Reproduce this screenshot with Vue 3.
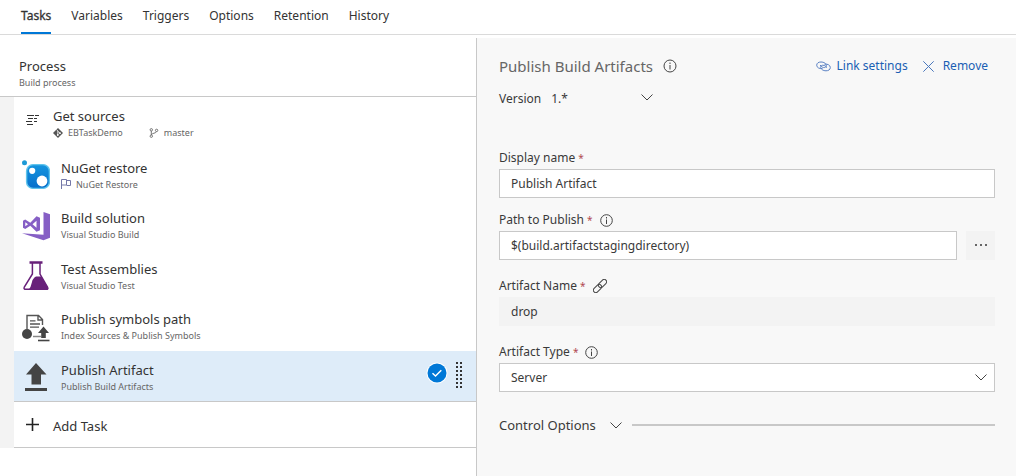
<script setup>
import { ref } from 'vue'

const tabs = ['Tasks', 'Variables', 'Triggers', 'Options', 'Retention', 'History']
const activeTab = ref('Tasks')

const tasks = [
  { icon: 'nuget', title: 'NuGet restore', sub: 'NuGet Restore', flag: true },
  { icon: 'vs', title: 'Build solution', sub: 'Visual Studio Build' },
  { icon: 'flask', title: 'Test Assemblies', sub: 'Visual Studio Test' },
  { icon: 'symbols', title: 'Publish symbols path', sub: 'Index Sources & Publish Symbols' },
  { icon: 'upload', title: 'Publish Artifact', sub: 'Publish Build Artifacts' },
]
const selected = ref('Publish Artifact')

const version = ref('1.*')
const displayName = ref('Publish Artifact')
const path = ref('$(build.artifactstagingdirectory)')
const artifactName = ref('drop')
const artifactType = ref('Server')
</script>

<template>
  <div class="page">
    <nav class="tabs">
      <a v-for="t in tabs" :key="t" href="#" class="tab" :class="{ active: t === activeTab }" @click.prevent="activeTab = t">{{ t }}</a>
    </nav>

    <div class="body">
      <section class="left">
        <header class="process">
          <div class="title">Process</div>
          <div class="sub">Build process</div>
        </header>

        <div class="list">
          <div class="sources">
            <svg class="src-icon" width="13" height="12" viewBox="0 0 13 12" fill="none" stroke="#333" stroke-width="1">
              <path d="M1 1.5h7M9 1.5h4M2 4.5h5M8 4.5h3M0 7.5h6M8 7.5h3M1 10.5h6" />
            </svg>
            <div>
              <div class="title">Get sources</div>
              <div class="sub meta">
                <svg width="10" height="10" viewBox="0 0 10 10">
                  <path d="M5 0L10 5L5 10L0 5Z" fill="#555" />
                  <path d="M3.6 1.6L4.8 3v4M4.8 3.3L7 5.2" stroke="#fff" stroke-width=".8" fill="none" />
                  <circle cx="4.8" cy="7" r=".9" fill="#fff" /><circle cx="7" cy="5.2" r=".9" fill="#fff" />
                </svg>
                <span class="repo">EBTaskDemo</span>
                <svg width="10" height="10" viewBox="0 0 10 10" fill="none" stroke="#666" stroke-width=".9">
                  <circle cx="2.3" cy="1.8" r="1.2" /><circle cx="7.6" cy="2.4" r="1.2" /><circle cx="2.3" cy="8.2" r="1.2" />
                  <path d="M2.3 3v4M7.4 3.6C7 5.6 3 4.8 2.4 6.8" />
                </svg>
                <span>master</span>
              </div>
            </div>
          </div>

          <div class="tasks">
            <div v-for="t in tasks" :key="t.title" class="task" :class="{ selected: t.title === selected }" @click="selected = t.title">
              <svg v-if="t.icon === 'nuget'" class="icon" viewBox="0 0 28 30">
                <defs>
                  <linearGradient id="nugetFill" x1="0" y1="0" x2="0" y2="1">
                    <stop offset="0" stop-color="#1595df" /><stop offset="1" stop-color="#066fcb" />
                  </linearGradient>
                </defs>
                <circle cx="2.5" cy="2.8" r="2.5" fill="#1c9ad6" />
                <rect x="4.6" y="4.6" width="22.8" height="23.8" rx="6.5" fill="url(#nugetFill)" stroke="#5fc4ec" stroke-width="1.4" />
                <circle cx="10.2" cy="10.8" r="3.1" fill="#fff" />
                <circle cx="20" cy="21" r="5.4" fill="#fff" />
              </svg>
              <svg v-else-if="t.icon === 'vs'" class="icon" viewBox="0 0 28 30">
                <path d="M21.5 1L28 3.2V26.7L21.5 29.2L0 22.3L21.5 23.8Z" fill="#865fc5" />
                <path fill-rule="evenodd" d="M1 9.8L3.2 8.5L8.3 11.7L14.5 5.2L18 6.8V19.2L14.5 20.8L8.3 14.7L3.2 18L1 16.7ZM3.3 11.3V15.2L6 13.2ZM14.5 9.7L10.5 13.2L14.5 16.7Z" fill="#865fc5" />
              </svg>
              <svg v-else-if="t.icon === 'flask'" class="icon" viewBox="0 0 28 30">
                <path d="M7.500 1.500H20.500" stroke="#68217a" stroke-width="2.500" />
                <path d="M10.400 2V13L2.300 26Q1.300 28.300 4 28.300H24Q26.800 28.300 25.500 26L18 13V2" fill="none" stroke="#68217a" stroke-width="1.500" />
                <path d="M14 15.500H19.500L26 27Q26.500 29 24 29H6.500Q9 26 10 21Q10.500 17.500 14 15.500Z" fill="#68217a" />
              </svg>
              <svg v-else-if="t.icon === 'symbols'" class="icon" viewBox="0 0 28 30">
                <path d="M5 17V3.500H16.500L20.500 7.500V13M16 3.500V8H20.500" fill="none" stroke="#555" stroke-width="1.400" />
                <path d="M8 8.800H13.500M8 12H18M8 15.200H17" stroke="#555" stroke-width="1.300" />
                <circle cx="5" cy="22" r="5" fill="#444" />
                <path d="M11 24.500H19" stroke="#888" stroke-width="1.500" />
                <path d="M21.500 14.500L27 21H23.800V26H19.200V21H16Z" fill="#444" />
                <path d="M16 28.500H27.500" stroke="#444" stroke-width="1.600" />
              </svg>
              <svg v-else class="icon" viewBox="0 0 28 30">
                <path d="M14 1L24.500 12.500H19V22.500H9.500V12.500H4Z" fill="#444" />
                <rect x="3" y="26" width="22" height="3" fill="#444" />
              </svg>
              <div class="text">
                <div class="title">{{ t.title }}</div>
                <div class="sub meta">
                  <svg v-if="t.flag" class="flag" width="10" height="10" viewBox="0 0 10 10" fill="none" stroke="#7478a8">
                    <path d="M.5 10V.5H5.500V6H.5M5.500 1.500H9.500V6.500H5.500" />
                  </svg>
                  <span>{{ t.sub }}</span>
                </div>
              </div>
              <template v-if="t.title === selected">
                <svg class="check" width="22" height="22" viewBox="0 0 22 22">
                  <circle cx="11" cy="11" r="10.500" fill="#fff" /><circle cx="11" cy="11" r="9.500" fill="#0078d7" />
                  <path d="M6.500 11.300L9.500 14L15.300 8.300" fill="none" stroke="#fff" stroke-width="1.500" />
                </svg>
                <svg class="grip" width="7" height="26" viewBox="0 0 7 26" stroke="#333" stroke-width="2" stroke-dasharray="2 2">
                  <path d="M1 0V26M5 0V26" />
                </svg>
              </template>
            </div>
          </div>

          <button type="button" class="add">
            <svg width="13" height="13" viewBox="0 0 13 13" stroke="#222" stroke-width="1.600"><path d="M6.500 0V13M0 6.500H13" /></svg>
            <span class="title">Add Task</span>
          </button>
        </div>
      </section>

      <section class="right">
        <header class="head">
          <h2>Publish Build Artifacts</h2>
          <button type="button" class="bare" aria-label="About this task">
            <svg width="14" height="14" viewBox="0 0 14 14" fill="none" stroke="#444"><circle cx="7" cy="7" r="6" /><path d="M7 6V10.500M7 3.500V5" /></svg>
          </button>
          <div class="actions">
            <a href="#" class="action" @click.prevent>
              <svg width="15" height="11" viewBox="0 0 15 11" fill="none" stroke="#5b82c4">
                <path d="M6.500 7.500C3.500 8 .7 6.600 .7 4.200C.7 2 2.700 1 5 1C8 1 10.600 2.700 10.300 4.900C10 6.900 7 7.200 5.300 5.300L4 4" />
                <path d="M8.500 3.200C11.500 2.600 14.300 4.200 14.300 6.500C14.300 8.800 12.300 9.800 10 9.800C7 9.800 4.400 8 4.700 5.900C5 3.900 8 3.600 9.700 5.400L11 6.700" />
              </svg>
              Link settings
            </a>
            <a href="#" class="action remove" @click.prevent>
              <svg width="11" height="11" viewBox="0 0 11 11" fill="none" stroke="#4a78bd"><path d="M.3 .3L10.700 10.700M10.700 .3L.3 10.700" /></svg>
              Remove
            </a>
          </div>
        </header>

        <div class="version">
          <label for="version">Version</label>
          <div class="select-wrap">
            <select id="version" v-model="version"><option>1.*</option></select>
            <svg class="chev" width="12" height="7" viewBox="0 0 12 7" fill="none" stroke="#444"><path d="M.5 .5L6 6L11.500 .5" /></svg>
          </div>
        </div>

        <div class="field">
          <div class="label"><label for="display">Display name <b>*</b></label></div>
          <input id="display" v-model="displayName" type="text">
        </div>

        <div class="field">
          <div class="label">
            <label for="path">Path to Publish <b>*</b></label>
            <button type="button" class="bare" aria-label="About Path to Publish">
              <svg width="13" height="13" viewBox="0 0 13 13" fill="none" stroke="#444"><circle cx="6.500" cy="6.500" r="5.800" /><path d="M6.500 5.500V10M6.500 3V4.500" /></svg>
            </button>
          </div>
          <div class="row">
            <input id="path" v-model="path" type="text">
            <button type="button" class="more" aria-label="Browse">
              <svg width="14" height="2" viewBox="0 0 14 2" fill="#666"><path d="M1 0h2v2h-2zM6 0h2v2h-2zM11 0h2v2h-2z" /></svg>
            </button>
          </div>
        </div>

        <div class="field linked">
          <div class="label">
            <label for="name">Artifact Name <b>*</b></label>
            <button type="button" class="bare" aria-label="Linked setting">
              <svg width="14" height="14" viewBox="0 0 14 14" fill="none" stroke="#444">
                <g transform="rotate(-45 7 7)"><rect x="-1.300" y="4.600" width="9.500" height="4.800" rx="2.400" /><rect x="5.800" y="4.600" width="9.500" height="4.800" rx="2.400" /></g>
              </svg>
            </button>
          </div>
          <input id="name" v-model="artifactName" type="text" readonly>
        </div>

        <div class="field linked">
          <div class="label">
            <label for="type">Artifact Type <b>*</b></label>
            <button type="button" class="bare" aria-label="About Artifact Type">
              <svg width="13" height="13" viewBox="0 0 13 13" fill="none" stroke="#444"><circle cx="6.500" cy="6.500" r="5.800" /><path d="M6.500 5.500V10M6.500 3V4.500" /></svg>
            </button>
          </div>
          <div class="select-wrap boxed">
            <select id="type" v-model="artifactType"><option>Server</option></select>
            <svg class="chev" width="12" height="7" viewBox="0 0 12 7" fill="none" stroke="#444"><path d="M.5 .5L6 6L11.500 .5" /></svg>
          </div>
        </div>

        <div class="control">
          <button type="button" class="bare expander">
            Control Options
            <svg width="12" height="7" viewBox="0 0 12 7" fill="none" stroke="#444"><path d="M.5 .5L6 6L11.500 .5" /></svg>
          </button>
          <div class="rule"></div>
        </div>
      </section>
    </div>
  </div>
</template>

<style>
body { background: #fff; }
</style>

<style scoped>
* { box-sizing: border-box; }
.page {
  min-height: 100vh;
  display: flex;
  flex-direction: column;
  font: 12px/16px "Noto Sans", "Open Sans", sans-serif;
  color: #3a3a3a;
}
svg { display: block; flex: none; }
input, select, button { font: inherit; color: inherit; margin: 0; border-radius: 0; }
.tabs {
  display: flex;
  gap: 20px;
  height: 35px;
  padding: 0 21px;
  border-bottom: 1px solid #dadada;
}
.tab {
  color: #333;
  text-decoration: none;
  line-height: 32px;
  border-bottom: 2px solid transparent;
}
.tab.active { border-bottom-color: #0078d7; -webkit-text-stroke: 0.300px #333; }
.body { flex: 1; display: flex; padding-top: 3px; }
.left { flex: 0 0 477px; border-right: 1px solid #c8c8c8; }
.process {
  height: 59px;
  padding: 18px 19px 0;
  border-bottom: 1px solid #c8c8c8;
}
.title { font-size: 13px; line-height: 20px; color: #333; }
.sub { font-size: 9px; line-height: 13px; color: #666; }
.meta { display: flex; align-items: center; }
.list { border-left: 14px solid #f3f3f3; }
.sources { display: flex; height: 52px; padding: 9px 0 0 12px; }
.src-icon { margin: 8px 14px 0 0; }
.meta svg { margin-right: 5px; }
.repo { margin-right: 26px; }
.task {
  display: flex;
  align-items: center;
  height: 50px;
  padding: 2px 13px 0 8px;
  cursor: pointer;
}
.task:nth-child(even) { height: 51px; }
.task.selected { height: 51px; background: #deecf9; border-bottom: 1px solid #c8c8c8; }
.icon { width: 28px; height: 30px; margin-right: 11px; }
.text { flex: 1; padding-bottom: 2px; }
.check { margin: 0 8px 8px 0; }
.grip { margin-bottom: 4px; }
.add {
  display: flex;
  align-items: center;
  width: 100%;
  height: 46px;
  padding: 0 12px;
  border: 0;
  border-bottom: 1px solid #c8c8c8;
  background: none;
  text-align: left;
}
.add svg { margin-right: 14px; }
.add .title { padding-top: 2px; }
.right { flex: 1; min-width: 0; padding: 17px 21px 0 22px; background: #f8f8f8; }
.head { display: flex; align-items: center; height: 22px; }
h2 { margin: 0 10px 0 0; font-weight: 400; font-size: 15px; line-height: 22px; color: #666; }
.bare { padding: 0; border: 0; background: none; }
.actions { display: flex; gap: 15px; margin-left: auto; padding-right: 7px; }
.action { display: flex; align-items: center; gap: 6px; color: #1a5fb4; text-decoration: none; }
.action.remove { gap: 9px; }
.version { display: flex; align-items: center; gap: 10px; height: 22px; margin-top: 11px; }
.select-wrap { position: relative; width: 104px; }
.select-wrap select { width: 100%; border: 0; padding: 0; background: none; appearance: none; outline: none; }
.chev { position: absolute; right: 2px; top: 50%; margin-top: -5px; pointer-events: none; }
.version + .field { margin-top: 37px; }
.field { margin-top: 11px; }
.label { display: flex; align-items: center; gap: 7px; height: 22px; }
.label b { font-weight: 400; font-size: 10px; color: #b04a50; }
.field input, .boxed {
  display: block;
  width: 100%;
  height: 29px;
  padding: 0 11px;
  border: 1px solid #c8c8c8;
  background: #fff;
  outline: none;
}
.boxed select { height: 27px; padding-top: 1px; }
.boxed .chev { right: 7px; margin-top: -4px; }
.field input[readonly] { background: #f3f3f3; border-color: #f3f3f3; }
.row { display: flex; gap: 9px; }
.row input { flex: 1; min-width: 0; }
.more { display: flex; align-items: center; justify-content: center; width: 29px; height: 29px; padding: 0 0 2px; border: 0; background: #f3f3f3; }
.linked { margin-top: 15px; }
.control { display: flex; align-items: center; gap: 10px; margin-top: 23px; }
.expander { display: flex; align-items: center; gap: 14px; font-size: 13px; line-height: 20px; }
.rule { flex: 1; height: 2px; background: #c8c8c8; }
</style>
